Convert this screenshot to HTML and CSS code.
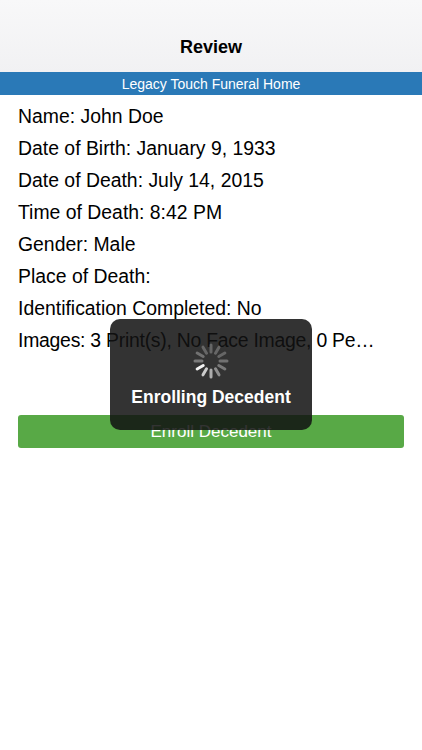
FILE: index.html
```html
<!DOCTYPE html>
<html lang="en">
<head>
    <meta charset="UTF-8">
    <meta name="viewport" content="width=device-width, initial-scale=1.0">
    <title>Review</title>
    <link rel="stylesheet" href="styles.css">
</head>
<body>
    <header class="navbar">
        <h1>Review</h1>
    </header>

    <!-- Funeral home -->
    <div class="home-bar">Legacy Touch Funeral Home</div>

    <!-- Decedent details -->
    <div class="detalles">
        <p>Name: John Doe</p>
        <p>Date of Birth: January 9, 1933</p>
        <p>Date of Death: July 14, 2015</p>
        <p>Time of Death: 8:42 PM</p>
        <p>Gender: Male</p>
        <p>Place of Death:</p>
        <p>Identification Completed: No</p>
        <p class="imagenes">Images: 3 Print(s), No Face Image, 0 Pe…</p>
    </div>

    <div class="acciones">
        <button class="btn-enroll">Enroll Decedent</button>
    </div>

    <!-- Progress overlay -->
    <div class="hud">
        <svg class="spinner" width="36" height="36" viewBox="-18 -18 36 36">
            <g stroke="#fff" stroke-width="3" stroke-linecap="round">
                <line x1="0" y1="-9" x2="0" y2="-16" opacity="0.25" transform="rotate(0)"/>
                <line x1="0" y1="-9" x2="0" y2="-16" opacity="0.25" transform="rotate(30)"/>
                <line x1="0" y1="-9" x2="0" y2="-16" opacity="0.25" transform="rotate(60)"/>
                <line x1="0" y1="-9" x2="0" y2="-16" opacity="0.3" transform="rotate(90)"/>
                <line x1="0" y1="-9" x2="0" y2="-16" opacity="0.35" transform="rotate(120)"/>
                <line x1="0" y1="-9" x2="0" y2="-16" opacity="0.45" transform="rotate(150)"/>
                <line x1="0" y1="-9" x2="0" y2="-16" opacity="0.6" transform="rotate(180)"/>
                <line x1="0" y1="-9" x2="0" y2="-16" opacity="0.75" transform="rotate(210)"/>
                <line x1="0" y1="-9" x2="0" y2="-16" opacity="0.95" transform="rotate(240)"/>
                <line x1="0" y1="-9" x2="0" y2="-16" opacity="0.35" transform="rotate(270)"/>
                <line x1="0" y1="-9" x2="0" y2="-16" opacity="0.3" transform="rotate(300)"/>
                <line x1="0" y1="-9" x2="0" y2="-16" opacity="0.25" transform="rotate(330)"/>
            </g>
        </svg>
        <span class="hud-texto">Enrolling Decedent</span>
    </div>
</body>
</html>
```

FILE: styles.css
```css
/* Review screen */
body {
    font-family: "Liberation Sans", Arial, sans-serif;
    margin: 0;
    padding: 0;
    background: #fff;
    color: #000;
}
.navbar {
    height: 72px;
    background: linear-gradient(#f8f8f9, #f1f1f3);
    display: flex;
    align-items: flex-end;
    justify-content: center;
    box-sizing: border-box;
    padding-bottom: 14px;
}
.navbar h1 {
    margin: 0;
    font-size: 18px;
    font-weight: bold;
    color: #000;
}
.home-bar {
    height: 23px;
    line-height: 24px;
    background: #2a79b7;
    color: #fff;
    text-align: center;
    font-size: 14px;
}
.detalles {
    padding: 5px 18px 0;
}
.detalles p {
    margin: 0;
    font-size: 19.4px;
    line-height: 32px;
    white-space: nowrap;
}
.detalles .imagenes {
    letter-spacing: -0.25px;
}
.acciones {
    padding: 59px 18px 0;
}
.btn-enroll {
    width: 100%;
    height: 33px;
    border: none;
    border-radius: 3px;
    background: #58a946;
    color: #fff;
    font-family: inherit;
    font-size: 17px;
    padding-top: 2px;
}
.hud {
    position: absolute;
    left: 110px;
    top: 319px;
    width: 202px;
    height: 111px;
    border-radius: 10px;
    background: rgba(18, 18, 18, 0.86);
    display: flex;
    flex-direction: column;
    align-items: center;
    padding-top: 24px;
    box-sizing: border-box;
}
.spinner {
    display: block;
}
.hud-texto {
    margin-top: 8px;
    color: #fff;
    font-size: 17.5px;
    font-weight: bold;
}
```
